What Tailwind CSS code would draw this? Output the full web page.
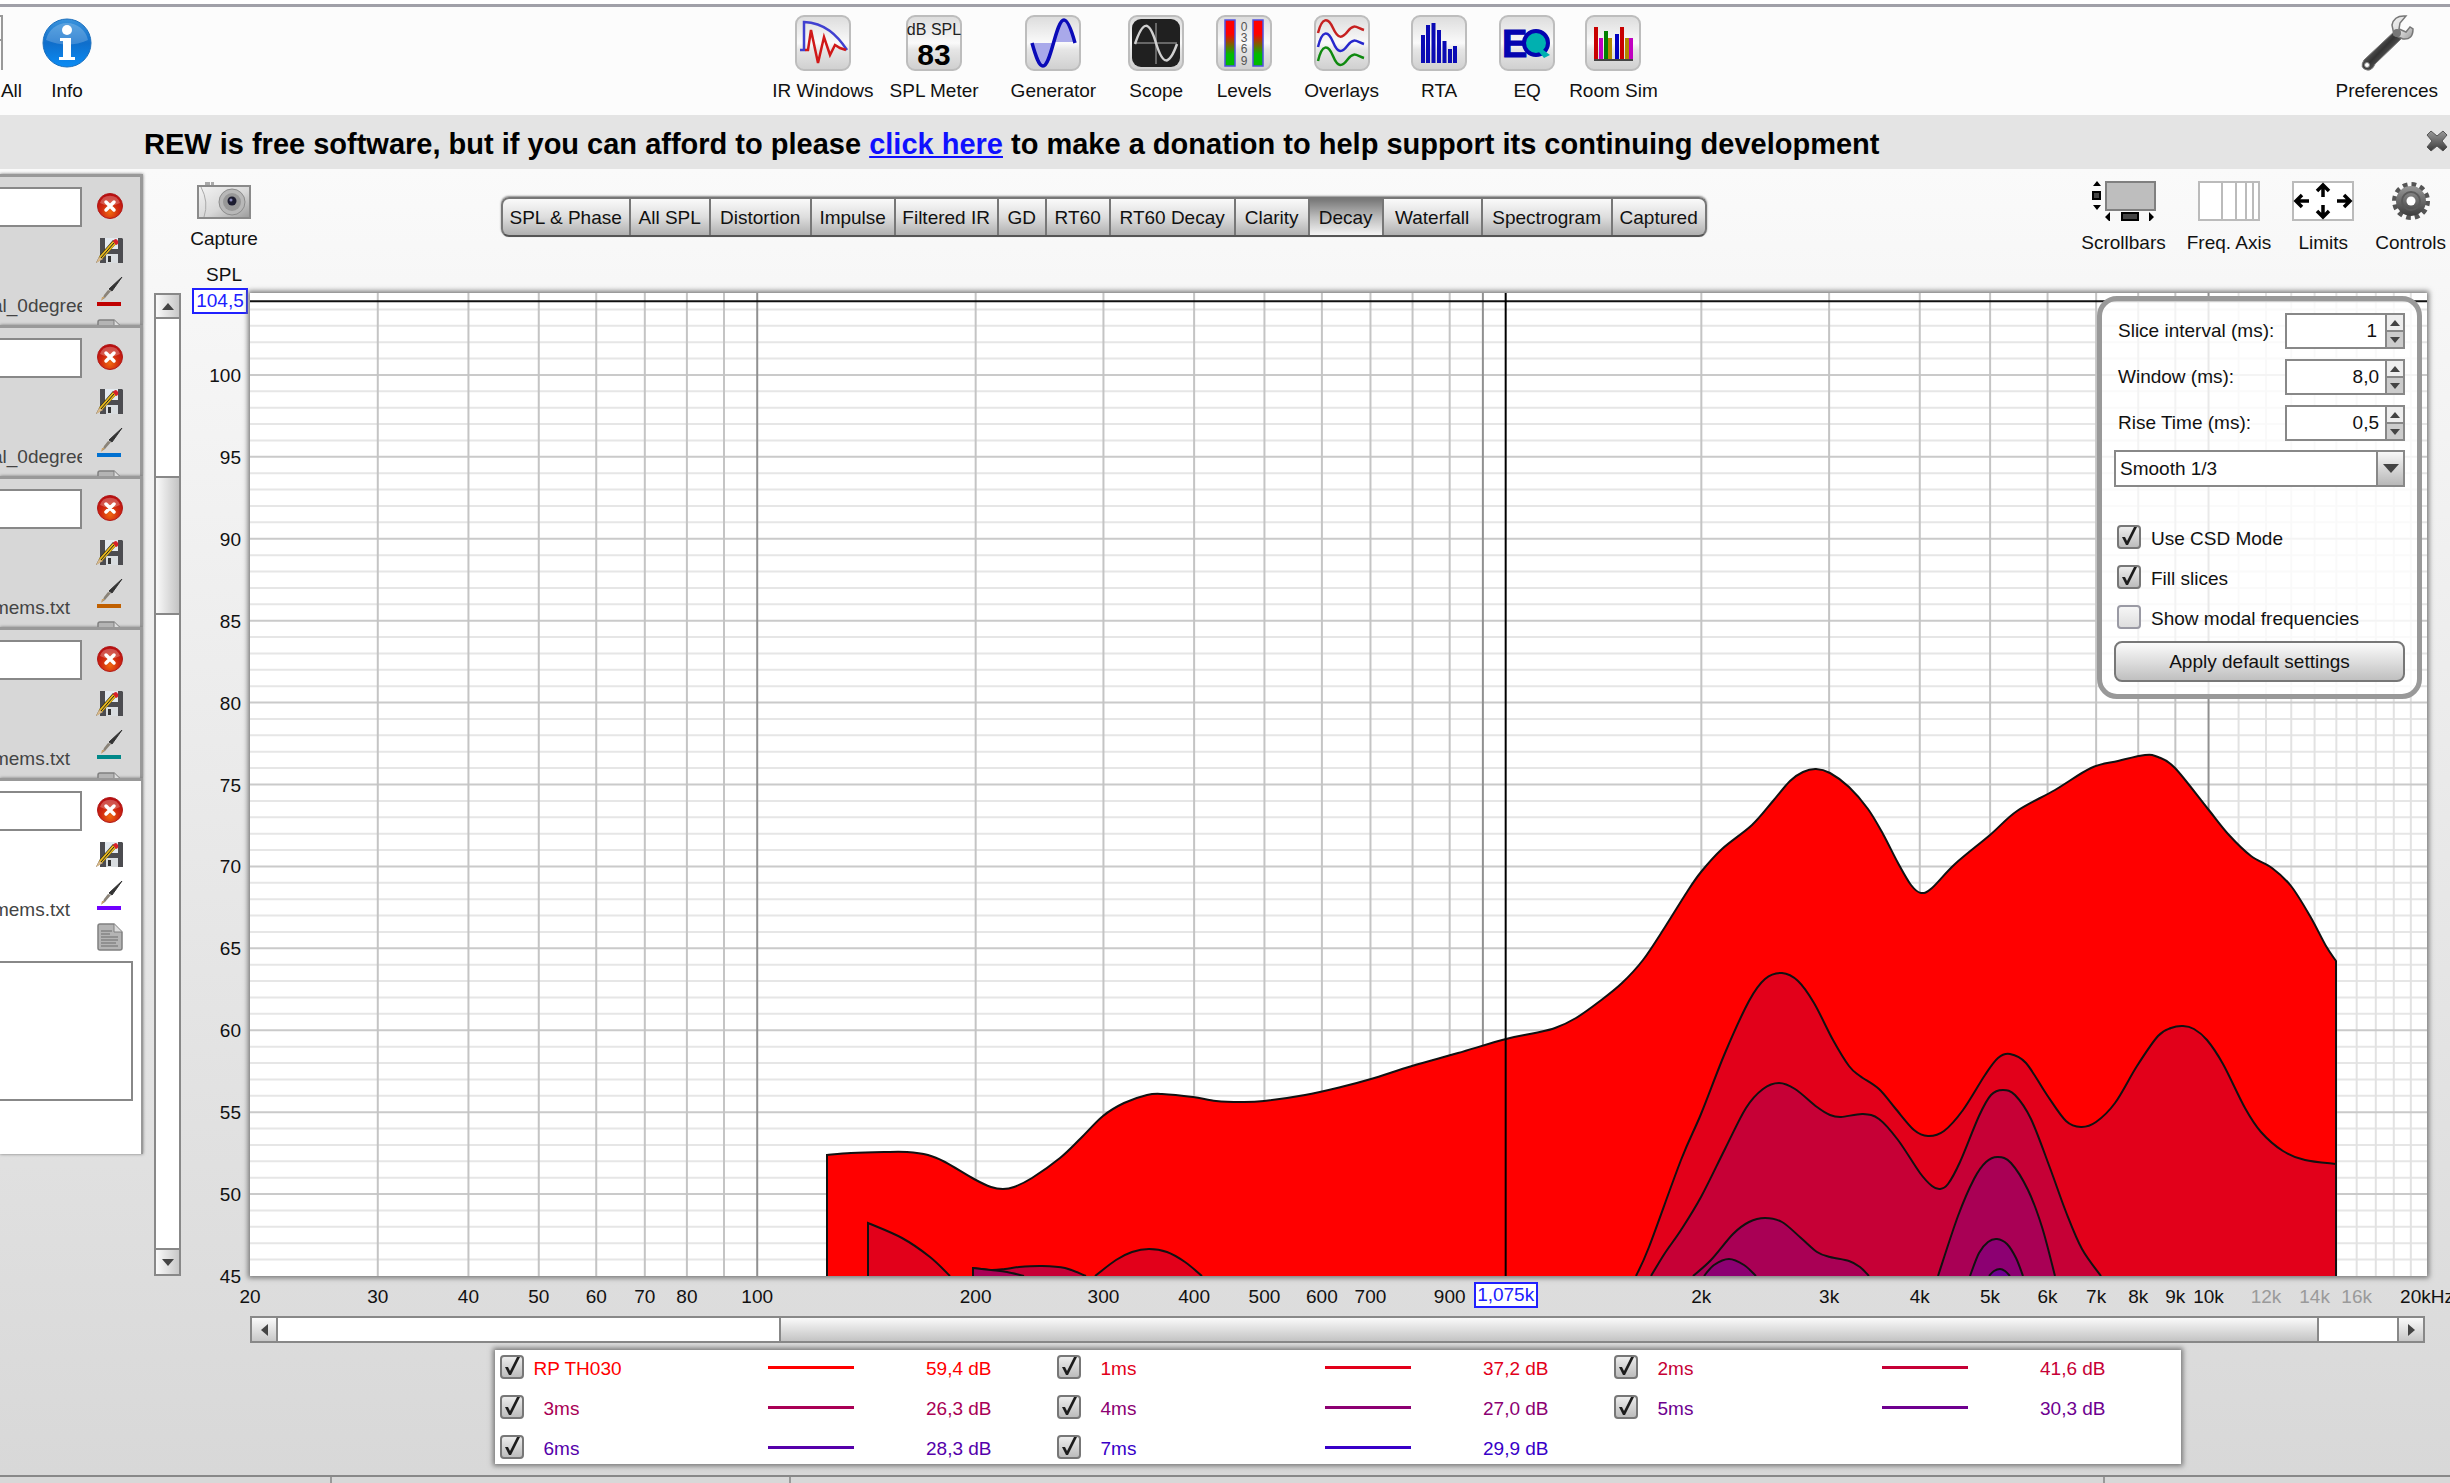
<!DOCTYPE html>
<html lang="en">
<head>
<meta charset="utf-8">
<title>REW - Decay</title>
<script src="https://cdn.jsdelivr.net/npm/@tailwindcss/browser@4"></script>
</head>
<body class="flex min-h-screen flex-col overflow-hidden bg-[#fcfcfc] font-['Liberation_Sans',Arial,sans-serif] text-[19px] leading-6 text-[#111]">

<svg class="absolute size-0" aria-hidden="true">
  <defs>
    <linearGradient id="tile" x1="0" y1="0" x2="0" y2="1"><stop offset="0" stop-color="#dcdcdc"/><stop offset=".5" stop-color="#fafafa"/><stop offset=".62" stop-color="#e6e6e6"/><stop offset="1" stop-color="#cfcfcf"/></linearGradient>
    <linearGradient id="level" x1="0" y1="0" x2="0" y2="1"><stop offset="0" stop-color="#f00"/><stop offset=".3" stop-color="#f00"/><stop offset=".75" stop-color="#0b0"/><stop offset="1" stop-color="#0b0"/></linearGradient>
    <linearGradient id="infoG" x1="0" y1="0" x2="0" y2="1"><stop offset="0" stop-color="#3a93dc"/><stop offset=".5" stop-color="#0f6ecb"/><stop offset="1" stop-color="#0a8cf5"/></linearGradient>
    <radialGradient id="redG" cx=".5" cy=".75" r=".7"><stop offset="0" stop-color="#f06a10"/><stop offset=".5" stop-color="#d02a10"/><stop offset="1" stop-color="#b80e10"/></radialGradient>
    <linearGradient id="metal" x1="0" y1="0" x2="1" y2="1"><stop offset="0" stop-color="#f4f4f4"/><stop offset=".55" stop-color="#d8d8d8"/><stop offset="1" stop-color="#9a9a9a"/></linearGradient>
    <linearGradient id="dark" x1="0" y1="0" x2="0" y2="1"><stop offset="0" stop-color="#999"/><stop offset="1" stop-color="#3c3c3c"/></linearGradient>
    <linearGradient id="handle" x1="0" y1="0" x2="1" y2="1"><stop offset="0" stop-color="#c8c8c8"/><stop offset=".5" stop-color="#333"/><stop offset="1" stop-color="#aaa"/></linearGradient>
    <symbol id="frame" viewBox="0 0 56 56"><rect x="1" y="1" width="54" height="54" rx="8" fill="url(#tile)" stroke="#bdbdbd" stroke-width="2"/></symbol>
    <symbol id="delete" viewBox="0 0 26 26"><circle cx="13" cy="13" r="12.5" fill="url(#redG)" stroke="#b01818"/><path d="M3 10a10.500 10.500 0 0 1 20 0q-10 5-20 0" fill="#fff" opacity=".25"/><path d="M9 9l8 8M17 9l-8 8" stroke="#fff" stroke-width="3.500" stroke-linecap="round"/></symbol>
    <symbol id="save" viewBox="0 0 28 28"><path d="M4 1h22l1 1v24H4z" fill="#4c4c50"/><path d="M9 1h13v11H9z" fill="#e4eaf0"/><path d="M10 17h12v9H10z" fill="#d9dde0"/><path d="M12 19h3v6h-3z" fill="#333"/><path d="M0 26l4-8L17 3l4 3L7 21z" fill="#2a2410"/><path d="M3 20L17 4l3 3L6 22z" fill="#e8b81c"/><path d="M5 21L18 6" stroke="#222"/><path d="M17 4q3-4 5 0 1 3-2 4z" fill="#d8202a"/><path d="M0 26l3-6 4 2z" fill="#d9b98a"/></symbol>
    <symbol id="brush" viewBox="0 0 26 25"><path d="M25 0L15 14l-3-2z" fill="#333" stroke="#333"/><path d="M14 14l-6 7-3 2 2-5 4-5z" fill="#8a8378"/><path d="M8 20l-4 4 1-4z" fill="#c9a26a"/></symbol>
    <symbol id="note" viewBox="0 0 26 28"><path d="M3 1h14l8 8v16q0 2-2 2H3q-2 0-2-2V3q0-2 2-2z" fill="#b4b4b4" stroke="#808080" stroke-width="1.500"/><path d="M17 1v8h8" fill="#ddd" stroke="#808080"/><path d="M4 8h11M4 11h9M4 14h17M4 17h17M4 20h15M4 23h17" stroke="#6c6c6c" stroke-width="1.200"/></symbol>
    <symbol id="check" viewBox="0 0 24 24"><path d="M5 12h3l2 4L17 2h3L11 20H9z" fill="#1c1c1c"/></symbol>
  </defs>
</svg>

<div class="h-[7px] border-b-[3px] border-[#a0a0a8] bg-white"></div>

<header class="grid h-[108px] shrink-0 grid-cols-[1fr_auto_1fr] items-start pt-2">
  <div class="flex items-start">
    <button class="flex w-[22px] flex-col items-end gap-2 overflow-hidden whitespace-nowrap">
      <svg class="h-14 w-[22px]" viewBox="0 0 22 56"><path d="M0 1h2v54M0 25h2" fill="none" stroke="#999" stroke-width="2"/></svg>
      <span>All</span>
    </button>
    <button class="ml-5 flex w-[50px] flex-col items-center gap-2">
      <svg class="h-14 w-[50px]" viewBox="0 -1 50 56"><circle cx="25" cy="27" r="24" fill="url(#infoG)" stroke="#1d70bd"/><path d="M4 24a21.500 21.500 0 0 1 42 0q-20 9-42 0z" fill="#fff" opacity=".2"/><circle cx="25" cy="14" r="5" fill="#fff"/><path d="M18 22h11v19h4v3H17v-3h4V25h-3z" fill="#fff"/></svg>
      <span>Info</span>
    </button>
  </div>
  <nav class="flex items-start gap-8 whitespace-nowrap pr-5">
    <button class="-mr-4 flex flex-col items-center gap-2">
      <svg class="size-14" viewBox="0 0 56 56"><use href="#frame"/><path d="M5 35h4V7C30 8 42 20 52 35" fill="none" stroke="#4040d0" stroke-width="2.500"/><path d="M10 35h3L16 15l7 33L29 22l6 18L40 30l5 3 6 2" fill="none" stroke="#d01818" stroke-width="2.500"/></svg>
      <span>IR Windows</span>
    </button>
    <button class="flex flex-col items-center gap-2">
      <svg class="size-14" viewBox="0 0 56 56"><use href="#frame"/><text x="28" y="20" text-anchor="middle" font-size="16" fill="#222">dB SPL</text><text x="28" y="50" text-anchor="middle" font-size="30" font-weight="bold">83</text></svg>
      <span>SPL Meter</span>
    </button>
    <button class="flex flex-col items-center gap-2">
      <svg class="size-14" viewBox="0 0 56 56"><use href="#frame"/><path d="M7 28h21c-4 14-7 23-10 23S10 40 7 28zM28 27C32 12 36 5 39 5s8 12 11 22z" fill="#a9a9ea"/><path d="M7 28c4 14 7 23 11 23C26 51 31 5 39 5c4 0 8 12 11 23" fill="none" stroke="#0a0ab8" stroke-width="3.500"/></svg>
      <span>Generator</span>
    </button>
    <button class="flex flex-col items-center gap-2">
      <svg class="size-14" viewBox="0 0 56 56"><use href="#frame"/><rect x="4" y="4" width="48" height="48" rx="9" fill="#202020"/><path d="M28 8v41M7 28h42" stroke="#666" stroke-width="2"/><path d="M7 29C15 5 21 5 28 28S41 51 49 29" fill="none" stroke="#d0d0d0" stroke-width="2.500"/></svg>
      <span>Scope</span>
    </button>
    <button class="flex flex-col items-center gap-2">
      <svg class="size-14" viewBox="0 0 56 56"><use href="#frame"/><rect x="9" y="5" width="10" height="46" fill="url(#level)" stroke="#5050e0" stroke-width="1.500"/><rect x="37" y="5" width="10" height="46" fill="url(#level)" stroke="#5050e0" stroke-width="1.500"/><g font-size="12" fill="#555" text-anchor="middle"><text x="28" y="16">0</text><text x="28" y="27">3</text><text x="28" y="38">6</text><text x="28" y="50">9</text></g></svg>
      <span>Levels</span>
    </button>
    <button class="flex flex-col items-center gap-2">
      <svg class="size-14" viewBox="0 0 56 56"><use href="#frame"/><g fill="none" stroke-width="2.500"><path d="M4 18C8 2 14 2 19 13s9 11 15 3 9-3 16-1" stroke="#c62020"/><path d="M4 32C8 15 14 15 19 27s9 11 15 3 9-3 16-1" stroke="#2828cc"/><path d="M4 46C8 29 14 29 19 41s9 11 15 3 9-3 16-1" stroke="#108a10"/></g></svg>
      <span>Overlays</span>
    </button>
    <button class="flex flex-col items-center gap-2">
      <svg class="size-14" viewBox="0 0 56 56"><use href="#frame"/><path d="M12 48V20M17 48V10M22.500 48V8M28 48V15M33.500 48V26M39 48V34M44 48V31" stroke="#0a0ab4" stroke-width="4"/></svg>
      <span>RTA</span>
    </button>
    <button class="-mr-[18px] flex flex-col items-center gap-2">
      <svg class="size-14" viewBox="0 0 56 56"><use href="#frame"/><circle cx="37" cy="28" r="12" fill="#00b0b0" stroke="#0404b0" stroke-width="4"/><path d="M43 34l8 6-6 3-5-6z" fill="#00b0b0"/><text x="3" y="42" font-size="38" font-weight="bold" fill="#0404b0" stroke="#0404b0">E</text></svg>
      <span>EQ</span>
    </button>
    <button class="flex flex-col items-center gap-2">
      <svg class="size-14" viewBox="0 0 56 56"><use href="#frame"/><g stroke-width="4"><path d="M11 45V12M37 45V12" stroke="#c80000"/><path d="M16 45V23M46 45V23" stroke="#c000c0"/><path d="M21 45V16" stroke="#008000"/><path d="M25 45V23M42 45V23" stroke="#b08800"/><path d="M32 45V19" stroke="#0000c0"/></g><path d="M9 45h39" stroke="#444" stroke-width="2"/></svg>
      <span>Room Sim</span>
    </button>
  </nav>
  <button class="mr-3 flex flex-col items-center gap-2 justify-self-end">
    <svg class="size-14" viewBox="0 0 56 56"><path d="M38 14L5 45q-5 8 3 10 5 1 8-6L43 23z" fill="url(#handle)" stroke="#777"/><path d="M47 1q-12-1-14 9l2 10 9 4q10 1 10-10l-3-2-4 5-7-3 1-6z" fill="url(#metal)" stroke="#777" stroke-width="1.500"/><circle cx="8" cy="50" r="2.500" fill="#fff" stroke="#888"/><circle cx="38" cy="18" r="4" fill="#777"/></svg>
    <span>Preferences</span>
  </button>
</header>

<div class="flex h-[54px] shrink-0 items-center justify-between bg-[#e4e4e4] pl-36 pr-[2px]">
  <p class="whitespace-nowrap pt-1 text-[29px] leading-8 font-bold text-black">REW is free software, but if you can afford to please <a href="#" class="text-[#1010ff] underline">click here</a> to make a donation to help support its continuing development</p>
  <button aria-label="Close" class="mb-[2px]"><svg class="size-[22px]" viewBox="0 0 22 22"><path d="M5 1l6 5 6-5 4 4-5 6 5 6-4 4-6-5-6 5-4-4 5-6-5-6z" fill="url(#dark)" stroke="#555"/></svg></button>
</div>

<main class="flex flex-1 bg-linear-to-b from-[#fafafa] to-[#d8d8d8]">
  <aside class="w-[143px] shrink-0 pt-[5px]" id="measurements"></aside>

  <section class="flex min-w-0 flex-1 flex-col pl-[11px]">
    <div class="flex h-[124px] shrink-0 items-start pt-3">
      <div class="flex w-[106px] shrink-0 flex-col items-center pl-[34px]">
        <button class="flex flex-col items-center gap-2">
          <svg class="h-[38px] w-[54px]" viewBox="0 0 54 38"><path d="M8 1h5v3H8zM14 1h3v3h-3z" fill="#aaa"/><path d="M1 5h52v32H1z" fill="url(#metal)" stroke="#8a8a8a" stroke-width="2"/><path d="M4 6q8 15 3 30" fill="none" stroke="#aaa"/><circle cx="35" cy="21" r="13" fill="#b8b8b8" stroke="#8c8c8c"/><circle cx="35" cy="21" r="9" fill="#989898"/><circle cx="35" cy="20" r="4.500" fill="#1c1c30"/><circle cx="34" cy="19" r="1.500" fill="#8888b8"/></svg>
          <span>Capture</span>
        </button>
        <span class="mt-3">SPL</span>
      </div>
      <div class="flex flex-1 justify-center pt-4 pr-[134px]">
        <div id="tabs" class="grid h-10 grid-cols-[128px_80px_101px_84px_103px_48px_64px_125px_74px_74px_99px_130px_92px] overflow-hidden rounded-lg border-2 border-[#777] border-b-[#555] bg-linear-to-b from-[#fafafa] via-[#dedede] to-[#b0b0b0] shadow-[0_-1px_2px_#888]"></div>
      </div>
      <div class="flex shrink-0 items-start gap-[21px] whitespace-nowrap pr-1">
        <button class="flex flex-col items-center gap-[10px]">
          <svg class="h-10 w-16" viewBox="0 0 64 40"><path d="M14 1h49v28H14z" fill="#bebebe" stroke="#808080" stroke-width="2"/><path d="M1 5l4-5 4 5zM1 24l4 5 4-5zM18 31l-5 5 5 5zM57 31l5 5-5 5z"/><path d="M1 11h7v7H1zM30 32h16v7H30z" fill="#444" stroke="#000" stroke-width="2"/></svg>
          <span>Scrollbars</span>
        </button>
        <button class="flex flex-col items-center gap-[10px]">
          <svg class="h-10 w-[62px]" viewBox="0 0 62 40"><path d="M1 1h60v38H1zM24 1v38M38 1v38M48 1v38M55 1v38" fill="#fff" stroke="#bbb" stroke-width="2"/></svg>
          <span>Freq. Axis</span>
        </button>
        <button class="flex flex-col items-center gap-[10px]">
          <svg class="h-10 w-[62px]" viewBox="0 0 62 40"><path d="M1 1h60v38H1z" fill="#fff" stroke="#bbb" stroke-width="2"/><path d="M31 16V5M25 10l6-6 6 6M31 24v11M25 30l6 6 6-6M17 20H5M10 14l-6 6 6 6M45 20h12M52 14l6 6-6 6" fill="none" stroke="#000" stroke-width="3.500"/></svg>
          <span>Limits</span>
        </button>
        <button class="flex flex-col items-center gap-[10px]">
          <svg class="h-10 w-10" viewBox="0 0 40 40"><circle cx="20" cy="20" r="16.500" fill="none" stroke="#555" stroke-width="5" stroke-dasharray="4.640 4"/><circle cx="20" cy="20" r="15" fill="url(#dark)"/><circle cx="20" cy="20" r="9" fill="none" stroke="#5a5a5a" stroke-width="2"/><circle cx="20" cy="20" r="4.500" fill="#fff"/></svg>
          <span>Controls</span>
        </button>
      </div>
    </div>

    <div class="flex flex-1">
      <div class="flex w-[27px] shrink-0 flex-col border-2 border-[#888] bg-white">
        <button aria-label="Scroll up" class="flex h-6 items-center justify-center border-b-2 border-[#888] bg-linear-to-r from-[#fafafa] to-[#c8c8c8]"><svg class="h-[7px] w-3" viewBox="0 0 12 7"><path d="M0 7l6-7 6 7z" fill="#444"/></svg></button>
        <div class="grow-[159]"></div>
        <div class="grow-[136] border-y-2 border-[#888] bg-linear-to-r from-[#fafafa] to-[#c4c4c4]"></div>
        <div class="grow-[640]"></div>
        <button aria-label="Scroll down" class="flex h-[26px] items-center justify-center border-t-2 border-[#888] bg-linear-to-r from-[#fafafa] to-[#c8c8c8]"><svg class="h-[7px] w-3" viewBox="0 0 12 7"><path d="M0 0l6 7 6-7z" fill="#444"/></svg></button>
      </div>
      <div id="y-axis" class="relative w-[69px] shrink-0"></div>
      <div class="relative mr-[23px] flex-1 bg-white shadow-[0_0_5px_2px_#777]">
        <svg id="plot" class="absolute inset-0 size-full" viewBox="0 0 2177 983" preserveAspectRatio="none"></svg>

        <form class="absolute top-[3px] right-[5px] flex w-[325px] flex-col rounded-[20px] border-[5px] border-[#999] bg-white/80 px-3 py-3">
          <div class="flex flex-col gap-[10px]" id="spinners"></div>
          <div class="relative mt-[9px]">
            <select aria-label="Smoothing" class="block h-[37px] w-full appearance-none border-2 border-[#888] bg-white pl-1 text-[19px]"><option>Smooth 1/3</option></select>
            <span class="pointer-events-none absolute inset-y-0 right-0 flex w-[29px] items-center justify-center border-2 border-[#888] bg-linear-to-b from-[#f8f8f8] to-[#b8b8b8]"><svg class="h-[9px] w-4" viewBox="0 0 16 9"><path d="M0 0l8 9 8-9z" fill="#444"/></svg></span>
          </div>
          <div class="mt-[38px] flex flex-col gap-4 pl-[3px]" id="options"></div>
          <button type="button" class="mt-3 h-[41px] rounded-lg border-2 border-[#777] bg-linear-to-b from-[#fbfbfb] via-[#dedede] to-[#c0c0c0]">Apply default settings</button>
        </form>
      </div>
    </div>

    <div id="x-axis" class="relative mr-[23px] ml-24 h-10 shrink-0"></div>

    <div class="mr-[25px] ml-24 flex h-[27px] shrink-0 border-2 border-[#888] bg-white">
      <button aria-label="Scroll left" class="flex w-[26px] items-center justify-center border-r-2 border-[#888] bg-linear-to-b from-[#fafafa] to-[#c8c8c8]"><svg class="h-3 w-[7px]" viewBox="0 0 7 12"><path d="M7 0L0 6l7 6z" fill="#444"/></svg></button>
      <div class="grow-[502]"></div>
      <div class="grow-[1541] border-x-2 border-[#888] bg-linear-to-b from-[#fafafa] to-[#c4c4c4]"></div>
      <div class="grow-[78]"></div>
      <button aria-label="Scroll right" class="flex w-[26px] items-center justify-center border-l-2 border-[#888] bg-linear-to-b from-[#fafafa] to-[#c8c8c8]"><svg class="h-3 w-[7px]" viewBox="0 0 7 12"><path d="M0 0l7 6-7 6z" fill="#444"/></svg></button>
    </div>

    <div class="mr-[25px] mb-[11px] ml-24 flex shrink-0 justify-center pt-[7px]">
      <div id="legend" class="grid w-[1686px] grid-cols-[repeat(3,557px)] gap-y-4 bg-white px-[5px] py-[5px] shadow-[0_0_5px_2px_#777]"></div>
    </div>
  </section>
</main>

<footer class="flex h-[8px] shrink-0 border-t-2 border-[#888] bg-[#d8d8d8]">
  <div class="w-[332px] border-r-2 border-[#999]"></div>
  <div class="w-[459px] border-r-2 border-[#999]"></div>
  <div class="flex-1 border-r-2 border-[#999]"></div>
  <div class="w-[345px]"></div>
</footer>

<script>
const byId = id => document.getElementById(id);

/* Measurement cards */
const measurements = [
  ['al_0degree', '#c00000'], ['al_0degree', '#0070d0'], ['mems.txt', '#c06000'], ['mems.txt', '#008888'], ['mems.txt', '#7000ff'],
];
byId('measurements').innerHTML = measurements.map(([file, color], i) => {
  const active = i === 4;
  const fileText = file === 'mems.txt' ? `<span class="flex w-[70px] justify-end text-[#444]">${file}</span>` : `<span class="flex w-[82px] overflow-hidden text-[#444]"><span class="-ml-2">${file}</span></span>`;
  return `<div class="${active ? 'h-[376px] bg-white border-r-2' : 'h-[151px] overflow-hidden bg-[#d7d7d7] border-r-[3px]'} border-t-[3px] border-[#999] shadow-[0_0_3px_#777]">
    <div class="flex pt-[10px]">
      <div class="flex w-24 flex-col">
        <input aria-label="Measurement name" class="h-10 w-[82px] border-2 border-l-0 border-[#888] bg-white">
        <div class="pt-[67px]">${fileText}</div>
      </div>
      <div class="flex flex-col items-center pt-[6px]">
        <button aria-label="Delete" class="h-[26px]"><svg class="size-[26px]"><use href="#delete"/></svg></button>
        <button aria-label="Save" class="mt-[18px] h-7"><svg class="size-7"><use href="#save"/></svg></button>
        <button aria-label="Trace colour" class="mt-3 flex h-[30px] flex-col"><svg class="h-[25px] w-[26px]"><use href="#brush"/></svg><span class="h-1 w-6" style="background:${color}"></span></button>
        <button aria-label="Notes" class="mt-3 h-7"><svg class="h-7 w-[26px]"><use href="#note"/></svg></button>
      </div>
    </div>
    ${active ? '<textarea aria-label="Notes" class="mt-[10px] block h-[140px] w-[133px] resize-none border-2 border-l-0 border-[#888] bg-white"></textarea>' : ''}
  </div>`;
}).join('');

/* Graph tabs */
byId('tabs').innerHTML = ['SPL & Phase', 'All SPL', 'Distortion', 'Impulse', 'Filtered IR', 'GD', 'RT60', 'RT60 Decay', 'Clarity', 'Decay', 'Waterfall', 'Spectrogram', 'Captured']
  .map(t => `<button class="whitespace-nowrap border-r-2 border-[#777] pt-px text-center last:border-r-0 ${t === 'Decay' ? 'bg-linear-to-b from-[#777] via-[#bcbcbc] to-[#f4f4f4]' : ''}">${t.replace('&', '&amp;')}</button>`).join('');

/* Decay settings */
const box = (id, on) => `<span class="relative block size-6"><input id="${id}" type="checkbox" ${on ? 'checked' : ''} class="block size-6 appearance-none rounded border-2 ${on ? 'border-[#777] bg-linear-to-b from-[#ececec] to-[#bcbcbc]' : 'border-[#9a9aa4] bg-linear-to-b from-[#f6f6f6] to-[#dedede]'}">${on ? '<svg class="pointer-events-none absolute inset-0 size-6"><use href="#check"/></svg>' : ''}</span>`;
byId('spinners').innerHTML = [['Slice interval (ms):', '1', 'slice', 'pr-2'], ['Window (ms):', '8,0', 'window', 'pr-[6px]'], ['Rise Time (ms):', '0,5', 'rise', 'pr-[6px]']].map(([l, v, id, pad]) => `
  <div class="flex h-9 items-center justify-between"><label for="${id}" class="pl-1">${l}</label>
    <span class="flex h-9 w-[120px] border-2 border-[#888] bg-white"><input id="${id}" value="${v}" class="w-full min-w-0 flex-1 text-right ${pad}">
      <span class="flex w-[18px] shrink-0 flex-col border-l-2 border-[#888]">
        <button type="button" aria-label="Increase" class="flex flex-1 items-center justify-center border-b border-[#888] bg-[#eee]"><svg class="h-[6px] w-[10px]" viewBox="0 0 10 6"><path d="M0 6l5-6 5 6z" fill="#444"/></svg></button>
        <button type="button" aria-label="Decrease" class="flex flex-1 items-center justify-center border-t border-[#888] bg-[#ccc]"><svg class="h-[6px] w-[10px]" viewBox="0 0 10 6"><path d="M0 0l5 6 5-6z" fill="#444"/></svg></button>
      </span></span></div>`).join('');
byId('options').innerHTML = [['Use CSD Mode', 1], ['Fill slices', 1], ['Show modal frequencies', 0]]
  .map(([l, on], i) => `<div class="flex h-6 items-center gap-[10px]">${box('opt' + i, on)}<label for="opt${i}" class="pt-[3px]">${l}</label></div>`).join('');

/* Legend */
const slices = [['RP TH030', '#ff0000', '59,4'], ['1ms', '#e2001a', '37,2'], ['2ms', '#c60036', '41,6'], ['3ms', '#a90055', '26,3'], ['4ms', '#8c0072', '27,0'], ['5ms', '#6e008f', '30,3'], ['6ms', '#5500aa', '28,3'], ['7ms', '#3800c8', '29,9']];
byId('legend').innerHTML = slices.map(([name, color, db], i) => `
  <div class="flex h-6 items-center" style="color:${color}">${box('slice' + i, 1)}
    <label for="slice${i}" class="w-[244px] pt-[3px] ${i ? 'pl-5' : 'pl-[10px]'}">${name}</label>
    <span class="h-[3px] w-[86px]" style="background:${color}"></span>
    <span class="w-[138px] pt-[3px] text-right">${db} dB</span></div>`).join('');

/* Plot scales: 20 Hz - 20 kHz (log), 45 - 105 dB */
const W = 2177, H = 983;
const fx = f => Math.log10(f / 20) / 3 * W;
const dy = d => (105 - d) / 60 * H;
let out = '';
const line = (x1, y1, x2, y2, c) => { out += `<path d="M${x1} ${y1}L${x2} ${y2}" stroke="${c}" stroke-width="2" vector-effect="non-scaling-stroke"/>`; };
for (let d = 46; d < 105; d++) if (d % 5) line(0, dy(d), W, dy(d), '#e6e6e6');
for (let k = 11; k < 20; k++) line(fx(k * 1000), 0, fx(k * 1000), H, '#e2e2e2');
for (let d = 50; d < 105; d += 5) line(0, dy(d), W, dy(d), '#cacaca');
for (const base of [10, 100, 1000]) for (let k = 2; k < 10; k++) { const f = base * k; if (f > 20) line(fx(f), 0, fx(f), H, '#c4c4c4'); }
for (const f of [100, 1000, 10000]) line(fx(f), 0, fx(f), H, '#909090');

/* Smooth curve through the sampled points, closed down to the floor */
const curve = (s, color) => {
  const p = s.split(' ').map(q => q.split(',').map(Number));
  let d = `M${p[0][0]} ${H}L${p[0]}`;
  for (let i = 0; i < p.length - 1; i++) {
    const a = p[i - 1] || p[i], b = p[i], c = p[i + 1], e = p[i + 2] || c;
    d += `C${b[0] + (c[0] - a[0]) / 6} ${b[1] + (c[1] - a[1]) / 6} ${c[0] - (e[0] - b[0]) / 6} ${c[1] - (e[1] - b[1]) / 6} ${c[0]} ${c[1]}`;
  }
  out += `<path d="${d}V${H}" fill="${color}" stroke="#111" stroke-width="2" vector-effect="non-scaling-stroke"/>`;
};
curve('577,862 601,860 634,859 657,859 678,862 695,869 724,886 741,894 753,896 764,894 782,885 810,865 831,845 853,823 874,810 897,802 912,801 943,804 966,808 991,809 1014,808 1055,802 1091,794 1121,786 1162,773 1208,760 1256,746 1285,740 1305,735 1326,725 1350,708 1372,690 1393,667 1415,634 1437,599 1451,579 1472,556 1502,532 1523,508 1540,488 1553,479 1566,476 1580,480 1599,494 1618,516 1633,541 1648,570 1661,592 1671,600 1682,595 1705,571 1740,542 1767,518 1805,497 1841,475 1868,468 1895,462 1908,464 1925,475 1958,516 1979,542 2001,563 2022,575 2041,593 2060,623 2076,653 2086,668', slices[0][1]);
curve('618,930 652,945 680,964 700,983', slices[1][1]);
curve('845,983 866,967 882,959 899,956 917,959 935,969 952,983', slices[1][1]);
curve('1386,983 1399,954 1431,867 1451,821 1475,760 1499,708 1515,686 1532,680 1548,688 1564,710 1583,747 1599,773 1610,783 1629,796 1645,815 1664,837 1678,843 1694,838 1713,817 1735,782 1748,765 1760,761 1776,770 1797,802 1816,828 1831,834 1846,829 1865,810 1887,773 1908,743 1921,735 1933,733 1944,736 1957,747 1973,771 1995,815 2011,839 2033,858 2055,867 2086,871', slices[1][1]);
curve('723,975 741,977 755,976 769,974 792,973 815,975 836,983', slices[2][1]);
curve('1401,983 1415,960 1431,937 1451,904 1475,856 1496,815 1513,796 1529,790 1545,796 1567,814 1580,822 1591,824 1613,821 1629,826 1648,847 1670,880 1682,893 1690,896 1698,891 1710,869 1729,823 1741,802 1753,797 1765,802 1781,826 1800,875 1816,919 1832,956 1851,983', slices[2][1]);
curve('723,975 741,977 757,979 774,983', slices[3][1]);
curve('1443,983 1461,967 1483,941 1499,929 1515,925 1532,929 1551,945 1567,959 1580,964 1599,968 1610,974 1619,983', slices[3][1]);
curve('1688,983 1708,923 1724,886 1736,869 1748,864 1761,870 1778,897 1792,934 1805,983', slices[3][1]);
curve('1454,983 1464,972 1479,966 1494,972 1506,983', slices[4][1]);
curve('1720,983 1729,960 1738,949 1747,946 1757,951 1766,965 1773,983', slices[4][1]);
curve('1739,983 1744,978 1750,976 1755,978 1760,983', slices[5][1]);
line(0, dy(104.5), W, dy(104.5), '#111');
line(fx(1075), 0, fx(1075), H, '#000');
byId('plot').innerHTML = out;

/* Axis labels */
let ys = '';
for (let d = 45; d <= 100; d += 5) ys += `<span class="absolute right-[9px] -translate-y-1/2 pt-[2px]" style="top:${dy(d) / H * 100}%">${d}</span>`;
ys += `<span class="absolute right-[2px] flex h-[26px] w-14 -translate-y-1/2 items-center justify-center border-2 border-[#2020ff] bg-white text-[#2020ff]" style="top:${dy(104.5) / H * 100}%">104,5</span>`;
byId('y-axis').innerHTML = ys;
const freqs = [20, 30, 40, 50, 60, 70, 80, 100, 200, 300, 400, 500, 600, 700, 900, 2000, 3000, 4000, 5000, 6000, 7000, 8000, 9000, 10000, 12000, 14000, 16000, 20000];
byId('x-axis').innerHTML = freqs.map(f => `<span class="absolute top-[9px] -translate-x-1/2 ${f > 10000 && f < 20000 ? 'text-[#9a9a9a]' : ''}" style="left:${fx(f) / W * 100}%">${f < 1000 ? f : f / 1000 + (f === 20000 ? 'kHz' : 'k')}</span>`).join('')
  + `<span class="absolute top-[6px] flex h-[26px] w-16 -translate-x-1/2 items-center justify-center border-2 border-[#2020ff] bg-white text-[#2020ff]" style="left:${fx(1075) / W * 100}%">1,075k</span>`;
</script>
</body>
</html>
